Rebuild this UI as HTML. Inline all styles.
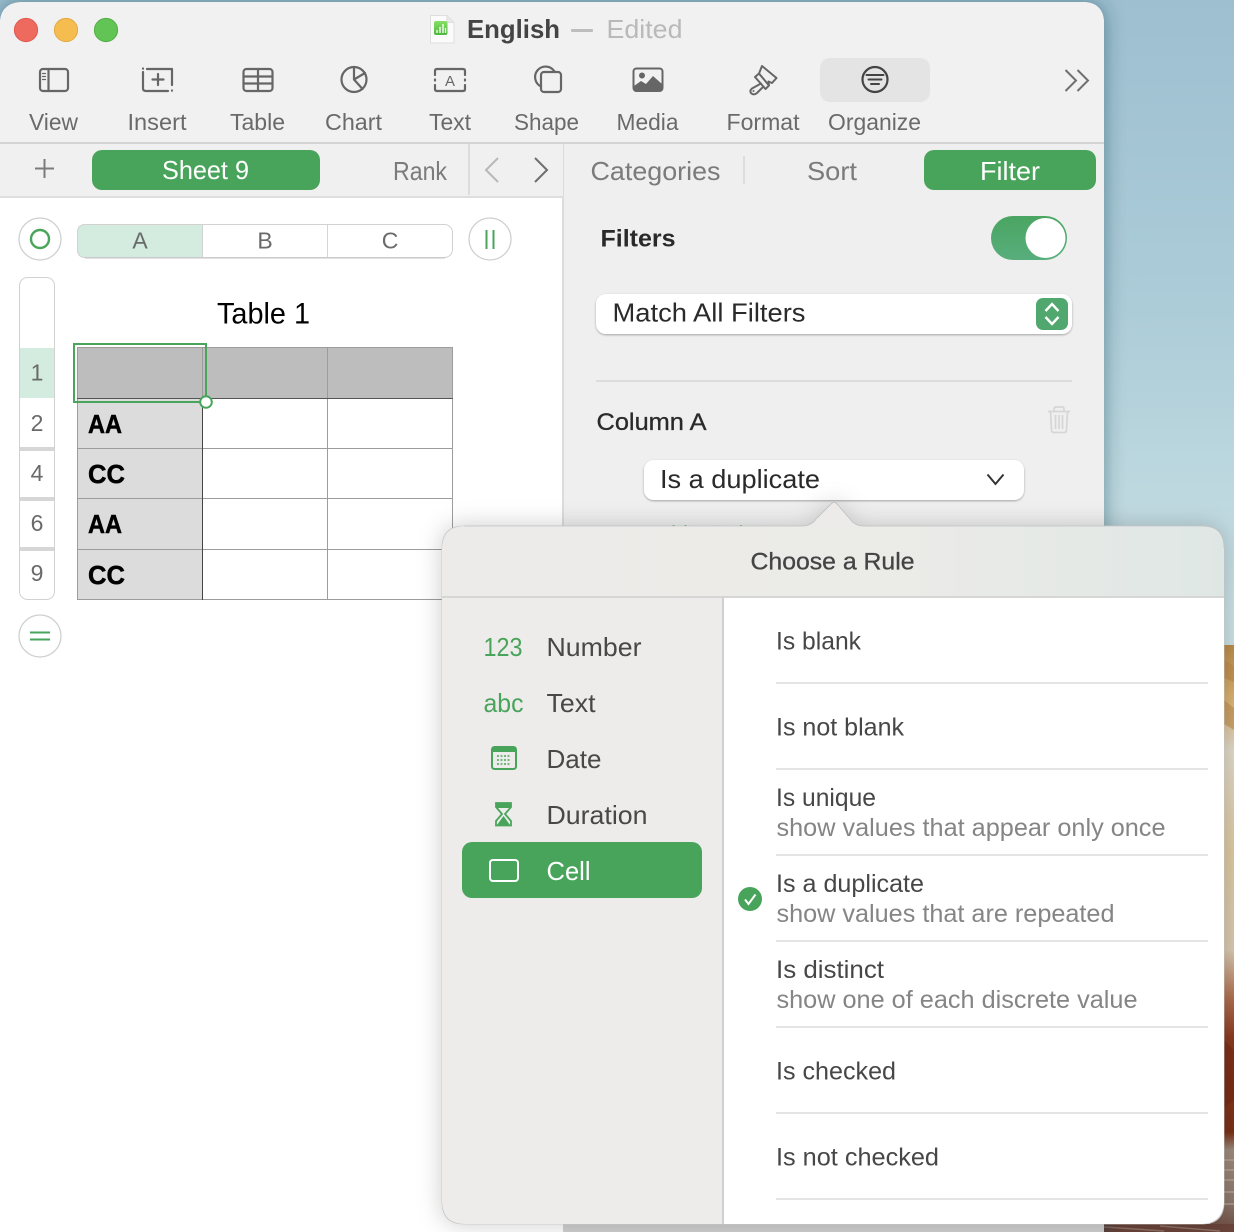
<!DOCTYPE html>
<html><head><meta charset="utf-8"><title>English</title>
<style>
html,body{margin:0;padding:0;background:#fff;width:1234px;height:1232px;overflow:hidden}
svg{display:block}
text{font-family:"Liberation Sans",Arial,sans-serif;white-space:pre}
.tb{font-size:23px;fill:#6a6a6a}
.tab{font-size:26px;fill:#7b7b7b}
.rule{font-size:25px;fill:#474747}
.sub{font-size:25px;fill:#858585}
.cat{font-size:26px;fill:#484848}
.ic{fill:none;stroke:#666;stroke-width:2.2;stroke-linecap:round;stroke-linejoin:round}
.hdr{font-size:23px;fill:#6a6a6a}
.bold{font-size:26px;font-weight:bold;fill:#000;stroke:#000;stroke-width:.5}
</style></head><body>
<svg width="1234" height="1232" viewBox="0 0 1234 1232" xmlns="http://www.w3.org/2000/svg">
<defs>
<linearGradient id="sky" x1="0" y1="0" x2="0" y2="1"><stop offset="0" stop-color="#9dbfd0"/><stop offset=".25" stop-color="#acccd8"/><stop offset=".5" stop-color="#c9e0e4"/><stop offset="1" stop-color="#d6e4e2"/></linearGradient>
<linearGradient id="rock" x1="0" y1="0" x2="0" y2="1">
<stop offset="0" stop-color="#b98a4a"/><stop offset=".09" stop-color="#d8b070"/><stop offset=".18" stop-color="#e0d8c8"/><stop offset=".35" stop-color="#dcc8a0"/><stop offset=".52" stop-color="#d8c8b0"/><stop offset=".6" stop-color="#b07050"/><stop offset=".67" stop-color="#8a3a20"/><stop offset=".83" stop-color="#7a3018"/><stop offset=".86" stop-color="#9c8a7c"/><stop offset=".945" stop-color="#8e7a6e"/><stop offset="1" stop-color="#6a473d"/></linearGradient>
<linearGradient id="hdr" x1="0" y1="0" x2="1" y2="0"><stop offset="0" stop-color="#ecebe9"/><stop offset=".6" stop-color="#ebebe8"/><stop offset="1" stop-color="#dfe7e5"/></linearGradient>
<linearGradient id="doc" x1="0" y1="0" x2="0" y2="1"><stop offset="0" stop-color="#86e065"/><stop offset="1" stop-color="#4cb83c"/></linearGradient>
<linearGradient id="tog" x1="0" y1="0" x2="0" y2="1"><stop offset="0" stop-color="#4aa561"/><stop offset="1" stop-color="#58ae7c"/></linearGradient>
<filter id="winS" x="-5%" y="-5%" width="112%" height="110%"><feDropShadow dx="0" dy="0" stdDeviation="10" flood-color="#1d3644" flood-opacity=".45"/></filter>
<filter id="popS" x="-8%" y="-8%" width="116%" height="116%"><feDropShadow dx="0" dy="0" stdDeviation="12" flood-color="#000" flood-opacity=".2"/></filter>
<filter id="btnS" x="-5%" y="-20%" width="110%" height="150%"><feDropShadow dx="0" dy="1" stdDeviation="1" flood-color="#000" flood-opacity=".32"/></filter>
<clipPath id="winC"><path d="M24 2H1082Q1104 2 1104 24V1232H0V24Q0 2 24 2Z"/></clipPath>
<clipPath id="popC"><rect x="442" y="526" width="782" height="698" rx="22"/></clipPath>
</defs>

<!-- desktop -->
<rect width="1234" height="1232" fill="url(#sky)"/>
<rect x="1210" y="645" width="24" height="587" fill="url(#rock)"/>
<path d="M1224 700l10 8v22l-10-6zM1224 660l10 6v16l-10-4z" fill="#b98643" opacity=".55"/>
<path d="M1224 1040l10 10v50l-10 8z" fill="#6e2410" opacity=".4"/>
<path d="M1224 1160h10M1224 1170h10M1224 1180h10M1224 1192h10M1224 1204h10" stroke="#c4b2a3" stroke-width="2" opacity=".5"/>
<rect x="1100" y="1224" width="134" height="8" fill="#6a4339"/>
<path d="M1104 1227l60 4M1160 1226l60 5" stroke="#8c7065" stroke-width="1.5"/>

<!-- window -->
<path d="M24 2H1082Q1104 2 1104 24V1240H0V24Q0 2 24 2Z" fill="#fff" filter="url(#winS)"/>
<g clip-path="url(#winC)">
<rect x="0" y="0" width="1104" height="143" fill="#f2f1f1"/>
<rect x="0" y="142" width="1104" height="2" fill="#d4d4d4"/>
<rect x="0" y="144" width="1104" height="53" fill="#f1f0f0"/>
<rect x="0" y="196" width="1104" height="2" fill="#dedede"/>
<rect x="563" y="144" width="541" height="1090" fill="#efefef"/>
<rect x="563" y="144" width="1" height="53" fill="#dcdcdc"/>
<rect x="562" y="197" width="2" height="1040" fill="#dcdcdc"/>
<rect x="468" y="144" width="2" height="51" fill="#dcdcdc"/>
<rect x="0" y="1224" width="1104" height="8" fill="#fff"/>
<rect x="563" y="1224" width="541" height="8" fill="#cfcfcf"/>
</g>

<!-- traffic lights -->
<circle cx="26" cy="30" r="11.6" fill="#ee6a5f" stroke="#e0574d"/>
<circle cx="66" cy="30" r="11.6" fill="#f5bd4f" stroke="#e3a93e"/>
<circle cx="106" cy="30" r="11.6" fill="#61c454" stroke="#52ad45"/>

<!-- doc icon and title -->
<path d="M430.500 15.500H447L454 22.500V43H430.500Z" fill="#fbfbfb" stroke="#dedede"/>
<path d="M447 15.500V22.500H454" fill="#e8e8e8" stroke="#dedede"/>
<rect x="434" y="21" width="13.500" height="14" rx="2" fill="url(#doc)"/>
<path d="M437 33v-3M440 33v-6M443 33v-9M445.500 33v-5" stroke="#fff" stroke-width="1.300"/>
<text x="467" y="38" font-size="26" font-weight="bold" fill="#444" textLength="93" lengthAdjust="spacingAndGlyphs">English</text>
<rect x="571" y="29" width="22" height="3" rx="1" fill="#bdbdbd"/>
<text x="606.500" y="38" font-size="26" fill="#b9b9b9" textLength="76" lengthAdjust="spacingAndGlyphs">Edited</text>

<!-- toolbar -->
<rect x="820" y="58" width="110" height="44" rx="10" fill="#e4e4e4"/>
<g class="ic">
<rect x="40" y="69" width="28" height="22" rx="3"/><path d="M48.500 69V91"/>
<path d="M42.500 73.500h3M42.500 76.500h3M42.500 79.500h3" stroke-width="1.300"/>
<path d="M147 69H172M143 72V88.500Q143 91 146 91H168M172 69V85M143 68.500v.1M172 90.500v.1M158 74V85M152.500 79.500H163.500"/>
<rect x="243.500" y="69" width="29" height="22" rx="3"/><path d="M243.500 76.500H272.500M243.500 83.500H272.500M258 69V91"/>
<circle cx="354" cy="79.500" r="12.500"/><path d="M354 67V79.500L365 73M354 79.500L362.500 89"/>
<path d="M435 75V71Q435 69 437 69H463Q465 69 465 71V75M435 85V89Q435 91 437 91H463Q465 91 465 89V85M435 79.500v1M465 79.500v1"/>
<path d="M541 86.500A10.500 10.500 0 1 1 554.500 71.500"/><rect x="541" y="72" width="20" height="20" rx="3"/>
</g>
<text x="450" y="86" font-size="15" fill="#666" text-anchor="middle">A</text>
<rect x="633.500" y="68.500" width="29" height="22.500" rx="3" fill="none" stroke="#666" stroke-width="2"/>
<path d="M634 88V86L641 81L646 84L653 76L662 84V88Q662 91 659 91H637Q634 91 634 88Z" fill="#666"/>
<circle cx="642" cy="75.500" r="3" fill="#666"/>
<path d="M762 66L776.500 78L772 83L768.500 81.500L769 85.500L765.500 89L755 77L759 73.500ZM759 73.500L769 85.500M761 83.500L752 88.500Q749 91 751.500 93.500Q754 95.500 757 93L763.500 86.500" fill="none" stroke="#666" stroke-width="2" stroke-linejoin="round" stroke-linecap="round"/>
<circle cx="753.500" cy="91" r="1" fill="#666"/>
<circle cx="875" cy="79.500" r="12.500" fill="none" stroke="#444" stroke-width="2.200"/>
<path d="M866.500 75H883.500M868.500 79.500H881.500M871 84H879" stroke="#444" stroke-width="2" stroke-linecap="round"/>
<path d="M1065.500 70L1076 80.500L1065.500 91M1077.500 70L1088 80.500L1077.500 91" fill="none" stroke="#707070" stroke-width="2"/>
<text class="tb" x="29" y="130" textLength="49" lengthAdjust="spacingAndGlyphs">View</text>
<text class="tb" x="127.500" y="130" textLength="59" lengthAdjust="spacingAndGlyphs">Insert</text>
<text class="tb" x="230" y="130" textLength="55" lengthAdjust="spacingAndGlyphs">Table</text>
<text class="tb" x="325" y="130" textLength="57" lengthAdjust="spacingAndGlyphs">Chart</text>
<text class="tb" x="429" y="130" textLength="42" lengthAdjust="spacingAndGlyphs">Text</text>
<text class="tb" x="514" y="130" textLength="65" lengthAdjust="spacingAndGlyphs">Shape</text>
<text class="tb" x="616.500" y="130" textLength="62" lengthAdjust="spacingAndGlyphs">Media</text>
<text class="tb" x="726.500" y="130" textLength="73" lengthAdjust="spacingAndGlyphs">Format</text>
<text class="tb" x="828" y="130" textLength="93" lengthAdjust="spacingAndGlyphs">Organize</text>

<!-- tab bar -->
<path d="M35 168.500H54M44.500 159V178" stroke="#7b7b7b" stroke-width="2"/>
<rect x="92" y="150" width="228" height="40" rx="10" fill="#49a45b"/>
<text x="162" y="179" font-size="26" fill="#fff" textLength="87" lengthAdjust="spacingAndGlyphs">Sheet 9</text>
<text class="tab" x="393" y="180" textLength="54" lengthAdjust="spacingAndGlyphs">Rank</text>
<path d="M498 158L486 170L498 182" fill="none" stroke="#b8b8b8" stroke-width="2"/>
<path d="M535 158L547 170L535 182" fill="none" stroke="#6e6e6e" stroke-width="2"/>
<text class="tab" x="590.500" y="180" textLength="130" lengthAdjust="spacingAndGlyphs">Categories</text>
<rect x="743" y="156" width="2" height="28" fill="#dcdcdc"/>
<text class="tab" x="807" y="180" textLength="50" lengthAdjust="spacingAndGlyphs">Sort</text>
<rect x="924" y="150" width="172" height="40" rx="10" fill="#49a45b"/>
<text x="980" y="180" font-size="26" fill="#fff" textLength="60" lengthAdjust="spacingAndGlyphs">Filter</text>

<!-- spreadsheet controls -->
<circle cx="40" cy="239" r="21" fill="#fff" stroke="#cfcfcf" stroke-width="1.300"/>
<circle cx="40" cy="239" r="9" fill="none" stroke="#4aa55c" stroke-width="2.400"/>
<circle cx="490" cy="239" r="21" fill="#fff" stroke="#cfcfcf" stroke-width="1.300"/>
<path d="M486.500 230V249M493.500 230V249" stroke="#4aa55c" stroke-width="2"/>
<circle cx="40" cy="636" r="21" fill="#fff" stroke="#cfcfcf" stroke-width="1.300"/>
<path d="M30 632.500H50M30 639.500H50" stroke="#4aa55c" stroke-width="2"/>

<!-- column header -->
<rect x="77.500" y="224.500" width="375" height="33" rx="8" fill="#fff" stroke="#d2d2d2"/>
<path d="M202.500 224.500H85.500Q77.500 224.500 77.500 232.500V249.500Q77.500 257.500 85.500 257.500H202.500Z" fill="#d3ecdf" stroke="#d2d2d2"/>
<path d="M327.500 225V257" stroke="#d5d5d5" stroke-width="1"/>
<path d="M85 258H445" stroke="#c4c4c4"/>
<text class="hdr" x="140" y="248.500" text-anchor="middle">A</text>
<text class="hdr" x="265" y="248.500" text-anchor="middle">B</text>
<text class="hdr" x="390" y="248.500" text-anchor="middle">C</text>

<!-- row header -->
<rect x="19.500" y="277.500" width="35" height="322" rx="8" fill="#fff" stroke="#d2d2d2"/>
<rect x="20" y="348" width="34" height="50" fill="#d3ecdf"/>
<rect x="20" y="447" width="34" height="4" fill="#d6d6d6"/>
<rect x="20" y="497" width="34" height="4" fill="#d6d6d6"/>
<rect x="20" y="547" width="34" height="4" fill="#d6d6d6"/>
<text class="hdr" x="37" y="380.500" text-anchor="middle">1</text>
<text class="hdr" x="37" y="431" text-anchor="middle">2</text>
<text class="hdr" x="37" y="481" text-anchor="middle">4</text>
<text class="hdr" x="37" y="531" text-anchor="middle">6</text>
<text class="hdr" x="37" y="581" text-anchor="middle">9</text>

<!-- table -->
<text x="217" y="323.500" font-size="30" fill="#000" textLength="93" lengthAdjust="spacingAndGlyphs">Table 1</text>
<rect x="77" y="347" width="376" height="252" fill="#fff"/>
<rect x="77" y="347" width="376" height="51" fill="#bcbdbc"/>
<rect x="77" y="398" width="126" height="201" fill="#dcdcdc"/>
<path d="M77 448.500H453M77 498.500H453M77 549.500H453M77 599.500H453" stroke="#9c9c9c"/>
<path d="M77.500 347V600M327.500 347V600M452.500 347V600M77 347.500H453M202.500 347V398" stroke="#9c9c9c"/>
<path d="M77 398.500H453" stroke="#555"/>
<path d="M202.500 398V600" stroke="#444"/>
<text class="bold" x="88" y="433" textLength="34" lengthAdjust="spacingAndGlyphs">AA</text>
<text class="bold" x="88" y="483" textLength="37" lengthAdjust="spacingAndGlyphs">CC</text>
<text class="bold" x="88" y="533" textLength="34" lengthAdjust="spacingAndGlyphs">AA</text>
<text class="bold" x="88" y="584" textLength="37" lengthAdjust="spacingAndGlyphs">CC</text>
<rect x="74" y="344" width="132" height="58" fill="none" stroke="#4aa55c" stroke-width="2"/>
<circle cx="206" cy="402" r="5.800" fill="#fff" stroke="#4aa55c" stroke-width="2"/>

<!-- filter panel -->
<text x="600.500" y="246.500" font-size="24" font-weight="bold" fill="#2a2a2a" textLength="75" lengthAdjust="spacingAndGlyphs">Filters</text>
<rect x="991" y="216" width="76" height="44" rx="22" fill="url(#tog)"/>
<ellipse cx="1045.500" cy="238" rx="20" ry="20" fill="#fff"/>
<rect x="596" y="294" width="476" height="40" rx="10" fill="#fff" filter="url(#btnS)"/>
<text x="612.500" y="321.500" font-size="26" fill="#2a2a2a" textLength="193" lengthAdjust="spacingAndGlyphs">Match All Filters</text>
<rect x="1036" y="298" width="32" height="32" rx="7" fill="#50a86e"/>
<path d="M1045.500 311L1052 304L1058.500 311M1045.500 317L1052 324L1058.500 317" fill="none" stroke="#fff" stroke-width="2.400"/>
<rect x="596" y="380" width="476" height="2" fill="#dcdcdc"/>
<text x="596.500" y="430" font-size="24" fill="#2a2a2a" stroke="#2a2a2a" stroke-width=".3" textLength="110" lengthAdjust="spacingAndGlyphs">Column A</text>
<path d="M1049 411.500H1071M1055 411.500V409Q1055 407 1057 407H1063Q1065 407 1065 409V411.500M1051.500 412L1052.500 430Q1052.500 432.500 1055 432.500H1065Q1067.500 432.500 1067.500 430L1068.500 412M1056.500 415V429M1060 415V429M1063.500 415V429" fill="none" stroke="#d6d6d6" stroke-width="1.700" transform="translate(-1 0)"/>
<rect x="644" y="460" width="380" height="40" rx="10" fill="#fff" filter="url(#btnS)"/>
<text x="660" y="488" font-size="26" fill="#2a2a2a" textLength="160" lengthAdjust="spacingAndGlyphs">Is a duplicate</text>
<path d="M987.500 474.500L995.500 484L1003.500 474.500" fill="none" stroke="#333" stroke-width="2"/>
<text x="650" y="543" font-size="25" fill="#49a45b" textLength="105" lengthAdjust="spacingAndGlyphs">Add a Rule</text>

<!-- popover -->
<path d="M464 526H802Q811 526 816 519L830 505Q834 500 838 505L850 519Q855 526 864 526H1202Q1224 526 1224 548V1202Q1224 1224 1202 1224H464Q442 1224 442 1202V548Q442 526 464 526Z" fill="#ecebe9" stroke="#c4c4c4" stroke-width=".8" filter="url(#popS)"/>
<g clip-path="url(#popC)">
<rect x="442" y="526" width="782" height="71" fill="url(#hdr)"/>
<rect x="442" y="597" width="282" height="627" fill="#edeceb"/>
<rect x="724" y="597" width="500" height="627" fill="#fff"/>
<rect x="442" y="596" width="782" height="2" fill="#d6d6d4"/>
<rect x="722" y="597" width="2" height="627" fill="#d0d0d0"/>
</g>
<path d="M464 526H802Q811 526 816 519L830 505Q834 500 838 505L850 519Q855 526 864 526H1202Q1224 526 1224 548" fill="none" stroke="#c0c4c4" stroke-width=".8"/>
<text x="750.500" y="569.500" font-size="24" fill="#444" stroke="#444" stroke-width=".3" textLength="164" lengthAdjust="spacingAndGlyphs">Choose a Rule</text>

<!-- categories -->
<text x="483.500" y="656" font-size="26" fill="#49a45b" textLength="39" lengthAdjust="spacingAndGlyphs">123</text>
<text class="cat" x="546.500" y="656" textLength="95" lengthAdjust="spacingAndGlyphs">Number</text>
<text x="483.500" y="712" font-size="26" fill="#49a45b" textLength="40" lengthAdjust="spacingAndGlyphs">abc</text>
<text class="cat" x="546.500" y="712" textLength="49" lengthAdjust="spacingAndGlyphs">Text</text>
<rect x="492" y="747" width="24" height="22" rx="2.500" fill="none" stroke="#49a45b" stroke-width="2"/>
<rect x="492" y="747" width="24" height="5" fill="#49a45b"/>
<path d="M497 756h14M497 760h14M497 764h14" stroke="#49a45b" stroke-width="1.600" stroke-dasharray="2 1.500"/>
<text class="cat" x="546.500" y="768" textLength="55" lengthAdjust="spacingAndGlyphs">Date</text>
<path d="M496 803H511V807L505 814L511 821V825.500H496V821L502 814L496 807Z" fill="none" stroke="#49a45b" stroke-width="1.800"/>
<path d="M496 803H511V808H496ZM503.500 816L510 825H497Z" fill="#49a45b"/>
<text class="cat" x="546.500" y="824" textLength="101" lengthAdjust="spacingAndGlyphs">Duration</text>
<rect x="462" y="842" width="240" height="56" rx="10" fill="#49a45b"/>
<rect x="490" y="860" width="28" height="21" rx="3" fill="none" stroke="#fff" stroke-width="2"/>
<text x="546.500" y="880" font-size="26" fill="#fff" textLength="44" lengthAdjust="spacingAndGlyphs">Cell</text>

<!-- rules -->
<g fill="#e4e4e4">
<rect x="776" y="682" width="432" height="2"/><rect x="776" y="768" width="432" height="2"/><rect x="776" y="854" width="432" height="2"/><rect x="776" y="940" width="432" height="2"/><rect x="776" y="1026" width="432" height="2"/><rect x="776" y="1112" width="432" height="2"/><rect x="776" y="1198" width="432" height="2"/>
</g>
<text class="rule" x="776" y="649.500" textLength="85" lengthAdjust="spacingAndGlyphs">Is blank</text>
<text class="rule" x="776" y="735.500" textLength="128" lengthAdjust="spacingAndGlyphs">Is not blank</text>
<text class="rule" x="776" y="806" textLength="100" lengthAdjust="spacingAndGlyphs">Is unique</text>
<text class="sub" x="776.500" y="836" textLength="389" lengthAdjust="spacingAndGlyphs">show values that appear only once</text>
<text class="rule" x="776" y="892" textLength="148" lengthAdjust="spacingAndGlyphs">Is a duplicate</text>
<text class="sub" x="776.500" y="922" textLength="338" lengthAdjust="spacingAndGlyphs">show values that are repeated</text>
<text class="rule" x="776" y="978" textLength="108" lengthAdjust="spacingAndGlyphs">Is distinct</text>
<text class="sub" x="776.500" y="1008" textLength="361" lengthAdjust="spacingAndGlyphs">show one of each discrete value</text>
<text class="rule" x="776" y="1079.500" textLength="120" lengthAdjust="spacingAndGlyphs">Is checked</text>
<text class="rule" x="776" y="1165.500" textLength="163" lengthAdjust="spacingAndGlyphs">Is not checked</text>
<circle cx="750" cy="899" r="12" fill="#49a45b"/>
<path d="M745 899.500L748.500 904L755.500 894.500" fill="none" stroke="#fff" stroke-width="2"/>
</svg>
</body></html>
